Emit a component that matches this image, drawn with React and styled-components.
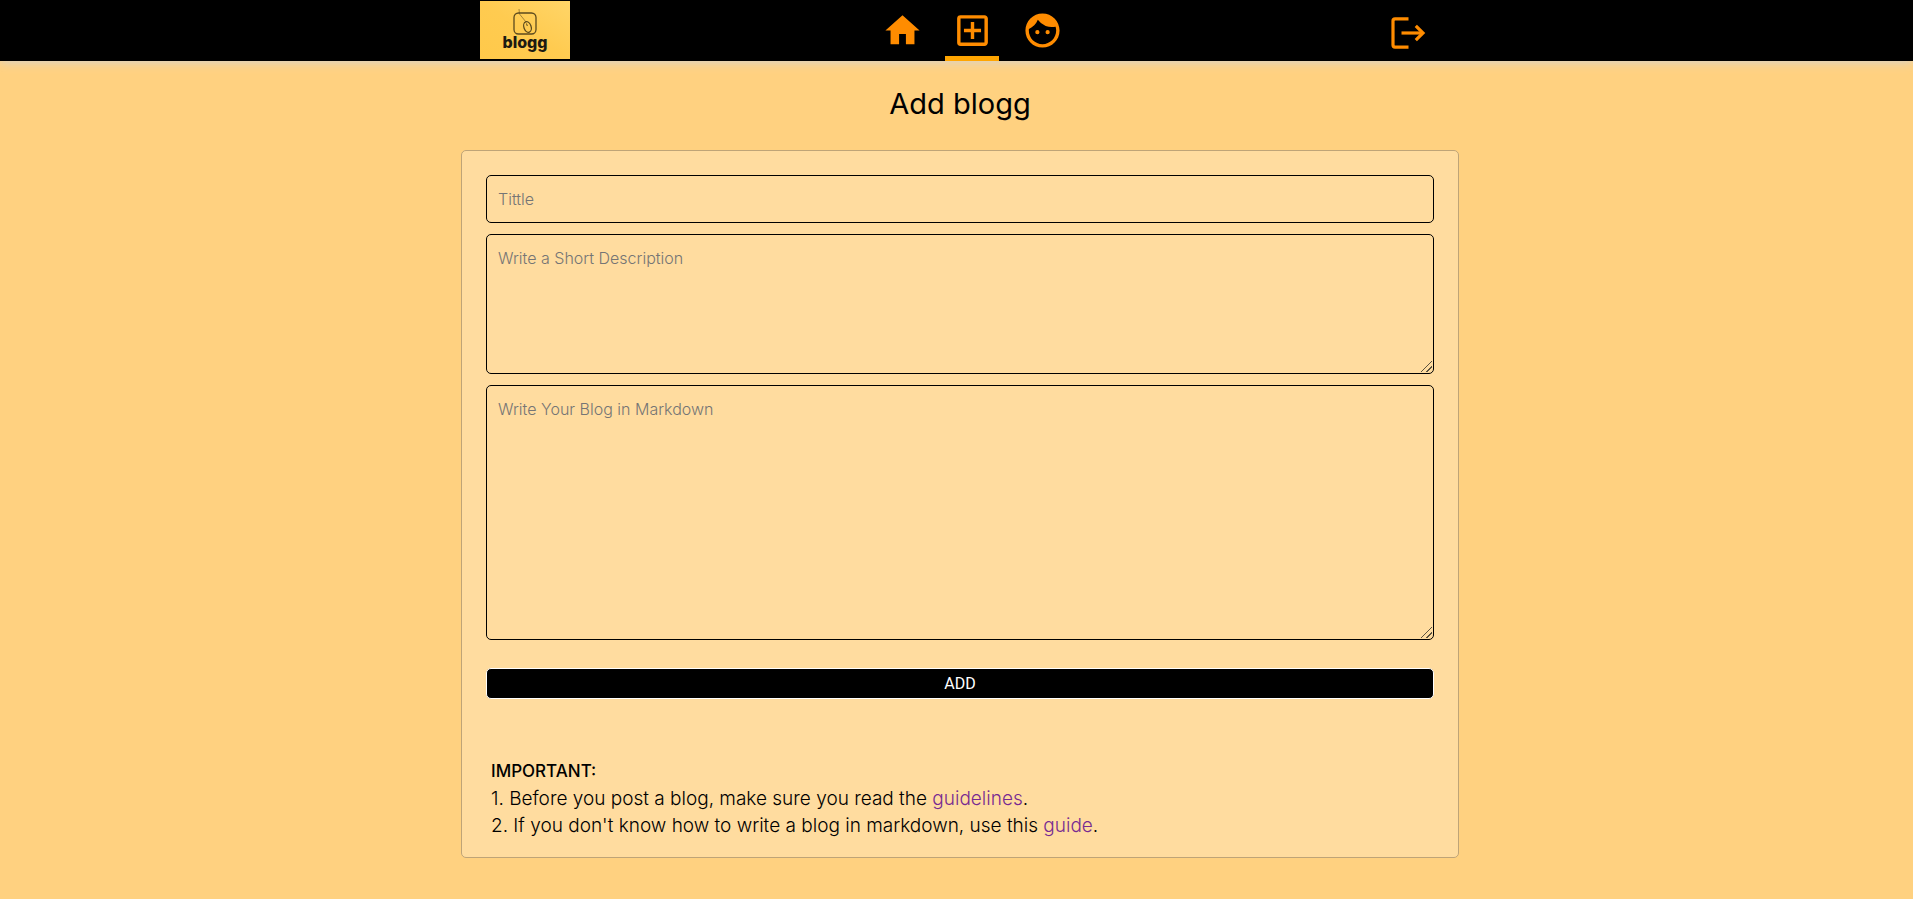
import React from 'react';
import styled, { createGlobalStyle } from 'styled-components';
import { MdHome, MdOutlineAddBox, MdFace } from 'react-icons/md';

const GlobalStyle = createGlobalStyle`
  *, *::before, *::after { box-sizing: border-box; }
  body {
    margin: 0;
    min-height: 100vh;
    background: #ffd180;
    color: #000;
    font-family: Inter, 'Open Sans', sans-serif;
    font-weight: 300;
  }
`;

const Header = styled.header`
  height: 61px;
  padding-left: 7px;
  background: #000;
  box-shadow: 0 1px 10px lightgray;
`;

const HeaderInner = styled.div`
  display: grid;
  grid-template-columns: 1fr auto 1fr;
  width: 100%;
  max-width: 960px;
  height: 100%;
  margin: 0 auto;
`;

const LogoLink = styled.a`
  justify-self: start;
  margin-top: 1px;
  height: 58px;
`;

const LogoArt = styled.svg`
  display: block;
  width: 90px;
  height: 58px;
`;

const Nav = styled.nav`
  display: flex;
  gap: 16px;
  padding-left: 24px;
`;

const NavLink = styled.a`
  display: flex;
  align-items: center;
  justify-content: center;
  width: 54px;
  padding-top: 5px;
  border-bottom: 5px solid ${(p) => (p.$active ? 'orange' : 'transparent')};
  color: darkorange;
  font-size: 41px;
`;

const LogoutButton = styled.button`
  display: flex;
  align-items: center;
  justify-self: end;
  margin-right: 14px;
  padding: 5px 0 0;
  border: 0;
  background: none;
  color: darkorange;
  cursor: pointer;
`;

const Main = styled.main`
  display: flex;
  flex-direction: column;
  align-items: center;
  padding: 22px 0 40px 7px;
`;

const Heading = styled.h1`
  margin: 0 0 25px;
  font-size: 29px;
  font-weight: 400;
  line-height: 42px;
`;

const Card = styled.section`
  width: 100%;
  max-width: 998px;
  padding: 24px 24px 18px;
  border: 1px solid #bfa477;
  border-radius: 5px;
  background: #ffdc9f;
`;

const Form = styled.form`
  display: flex;
  flex-direction: column;
  gap: 11px;
`;

const fieldStyle = `
  display: block;
  width: 100%;
  margin: 0;
  border: 1px solid #000;
  border-radius: 5px;
  background: transparent;
  font-family: inherit;
  font-size: 16px;
  font-weight: 300;
  line-height: 23px;
  &::placeholder { color: #757575; opacity: 1; }
`;

const TextInput = styled.input`
  ${fieldStyle}
  height: 48px;
  padding: 12px 11px;
`;

const TextArea = styled.textarea`
  ${fieldStyle}
  height: ${(p) => p.$height}px;
  padding: 12px 11px;
  resize: both;

  &::-webkit-resizer {
    background: linear-gradient(
        135deg,
        transparent 46%,
        #5c5340 46% 53%,
        transparent 53% 72%,
        #5c5340 72% 79%,
        transparent 79%
      )
      3px 3px / 11px 11px no-repeat;
  }
`;

const SubmitButton = styled.button`
  height: 31px;
  margin-top: 17px;
  padding: 0;
  border: 1px solid #fff;
  border-radius: 5px;
  background: #000;
  color: #fff;
  font-family: Roboto, Arial, sans-serif;
  font-size: 16px;
  cursor: pointer;
`;

const Notes = styled.div`
  margin-top: 59px;
  padding: 0 5px;
  font-size: 19px;
  line-height: 27px;
`;

const NotesTitle = styled.strong`
  display: block;
  font-size: 17px;
  font-weight: 500;
`;

const Note = styled.p`
  margin: 0;
`;

const NoteLink = styled.a`
  color: #772a91;
  text-decoration: none;
`;

function Logo() {
  return (
    <LogoArt viewBox="0 0 90 58" aria-hidden="true">
      <defs>
        <linearGradient id="logoFill" x1="0" y1="1" x2="1" y2="0">
          <stop offset="0" stopColor="#ffc94a" />
          <stop offset="0.5" stopColor="#ffcb50" />
          <stop offset="1" stopColor="#ffd568" />
        </linearGradient>
      </defs>
      <rect width="90" height="58" fill="url(#logoFill)" />
      <g fill="none" stroke="#5c4a1e">
        <rect x="34" y="12" width="22" height="21" rx="4.5" strokeWidth="1.3" />
        <path d="M39 8 L39.5 13 L46 21" strokeWidth="0.8" opacity="0.7" />
        <ellipse cx="47.5" cy="26" rx="3.6" ry="5.4" strokeWidth="1.3" transform="rotate(-20 47.5 26)" />
        <path d="M46.5 22.5 L47.3 25" strokeWidth="1" />
      </g>
      <text x="45" y="47" textAnchor="middle" fontFamily="Inter, sans-serif" fontWeight="800" fontSize="16" fill="#1d1b12">
        blogg
      </text>
    </LogoArt>
  );
}

function LogoutIcon() {
  return (
    <svg width="35" height="32" viewBox="0 0 35 32" fill="none" stroke="currentColor" strokeWidth="3.2" aria-hidden="true">
      <path d="M17.5 1.9 H4 Q2 1.9 2 3.9 V28.1 Q2 30.1 4 30.1 H17.5" />
      <path d="M10.5 16 H32" />
      <path d="M24.8 8.8 L32 16 L24.8 23.2" />
    </svg>
  );
}

export default function App() {
  return (
    <>
      <GlobalStyle />
      <Header>
        <HeaderInner>
          <LogoLink href="#" aria-label="blogg">
            <Logo />
          </LogoLink>
          <Nav>
            <NavLink href="#home" aria-label="Home"><MdHome /></NavLink>
            <NavLink href="#add" aria-label="Add" $active><MdOutlineAddBox /></NavLink>
            <NavLink href="#profile" aria-label="Profile"><MdFace /></NavLink>
          </Nav>
          <LogoutButton type="button" aria-label="Log out"><LogoutIcon /></LogoutButton>
        </HeaderInner>
      </Header>
      <Main>
        <Heading>Add blogg</Heading>
        <Card>
          <Form onSubmit={(e) => e.preventDefault()}>
            <TextInput type="text" placeholder="Tittle" aria-label="Tittle" />
            <TextArea $height={140} placeholder="Write a Short Description" aria-label="Write a Short Description" />
            <TextArea $height={255} placeholder="Write Your Blog in Markdown" aria-label="Write Your Blog in Markdown" />
            <SubmitButton type="submit">ADD</SubmitButton>
          </Form>
          <Notes>
            <NotesTitle>IMPORTANT:</NotesTitle>
            <Note>1. Before you post a blog, make sure you read the <NoteLink href="#guidelines">guidelines</NoteLink>.</Note>
            <Note>2. If you don't know how to write a blog in markdown, use this <NoteLink href="#guide">guide</NoteLink>.</Note>
          </Notes>
        </Card>
      </Main>
    </>
  );
}
